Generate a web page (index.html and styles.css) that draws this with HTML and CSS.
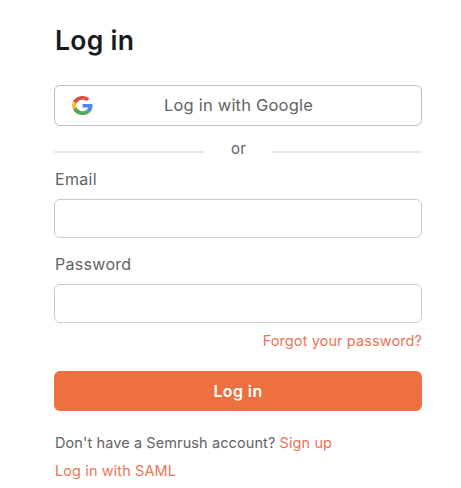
FILE: index.html
```html
<!DOCTYPE html>
<html lang="en">
<head>
<meta charset="utf-8">
<title>Log in</title>
<link rel="stylesheet" href="styles.css">
</head>
<body>
<main class="login">
  <h1 class="title">Log in</h1>
  <button class="google" type="button">
    <svg class="google-icon" viewBox="0 0 48 48" preserveAspectRatio="none" aria-hidden="true">
      <path fill="#DB5140" d="M24 9.5c3.54 0 6.71 1.22 9.21 3.6l6.85-6.85C35.9 2.38 30.47 0 24 0 14.62 0 6.51 5.38 2.56 13.22l7.98 6.19C12.43 13.72 17.74 9.5 24 9.5z"/>
      <path fill="#5087EE" d="M46.98 24.55c0-1.57-.15-3.09-.38-4.55H24v9.02h12.94c-.58 2.96-2.26 5.48-4.78 7.18l7.73 6c4.51-4.18 7.09-10.36 7.09-17.65z"/>
      <path fill="#F3BE42" d="M10.53 28.59c-.48-1.45-.76-2.99-.76-4.59s.27-3.14.76-4.59l-7.98-6.19C.92 16.46 0 20.12 0 24s.92 7.54 2.56 10.78l7.97-6.19z"/>
      <path fill="#58A55B" d="M24 48c6.48 0 11.93-2.13 15.89-5.81l-7.73-6c-2.15 1.45-4.92 2.3-8.16 2.3-6.26 0-11.57-4.22-13.47-9.91l-7.98 6.19C6.51 42.62 14.62 48 24 48z"/>
    </svg>
    <span class="google-label">Log in with Google</span>
  </button>
  <div class="divider"><span class="or">or</span></div>
  <form class="form">
    <label class="label" for="email">Email</label>
    <input class="input" id="email" type="email">
    <label class="label label-password" for="password">Password</label>
    <input class="input" id="password" type="password">
    <a class="link forgot">Forgot your password?</a>
    <button class="submit" type="button">Log in</button>
  </form>
  <p class="signup">Don't have a Semrush account? <a class="link">Sign up</a></p>
  <p class="saml"><a class="link">Log in with SAML</a></p>
</main>
</body>
</html>
```

FILE: styles.css
```css
* { box-sizing: border-box; }
body { margin: 0; background: #fff; color: #626367; font: 14.5px/20px Inter, sans-serif; }
.login { width: 368px; margin-left: 54px; padding-top: 24px; }
.title { margin: 0 0 29px 1px; font-size: 26.5px; line-height: 32px; font-weight: 600; letter-spacing: .3px; color: #181a22; }
.google { display: grid; grid-template-columns: 21px 1fr 21px; align-items: center; width: 100%; height: 41px; padding: 0 16px 1px 17px; border: 1px solid #bbbdc5; border-radius: 6px; background: #fff; color: #626367; font: 16.5px/20px Inter, sans-serif; }
.google-icon { width: 21px; height: 19px; }
.google-label { letter-spacing: .2px; }
.divider { display: flex; align-items: center; height: 20px; margin-top: 13px; }
.divider::before, .divider::after { content: ""; flex: 1; height: 2px; margin-top: 6px; background: #e7e7e9; }
.or { width: 68px; padding-left: 1px; text-align: center; font-size: 15px; letter-spacing: .3px; }
.form { display: flex; flex-direction: column; }
.label { margin: 10px 0 10px 1px; font-size: 16px; line-height: 20px; letter-spacing: .3px; }
.label-password { margin-top: 16px; }
.input { width: 100%; height: 39px; padding: 0 12px; border: 1px solid #c9cad1; border-radius: 6px; background: #fff; }
.link { color: #ec7458; text-decoration: none; }
.forgot { align-self: flex-end; margin-top: 8px; letter-spacing: .1px; }
.submit { height: 40px; margin-top: 20px; border: 0; border-radius: 6px; background: #ee6f40; color: #fff; font: 600 16px/20px Inter, sans-serif; letter-spacing: .4px; }
.signup, .saml { margin: 22px 0 0 1px; line-height: 20px; letter-spacing: .1px; }
.saml { margin-top: 8px; }
```
